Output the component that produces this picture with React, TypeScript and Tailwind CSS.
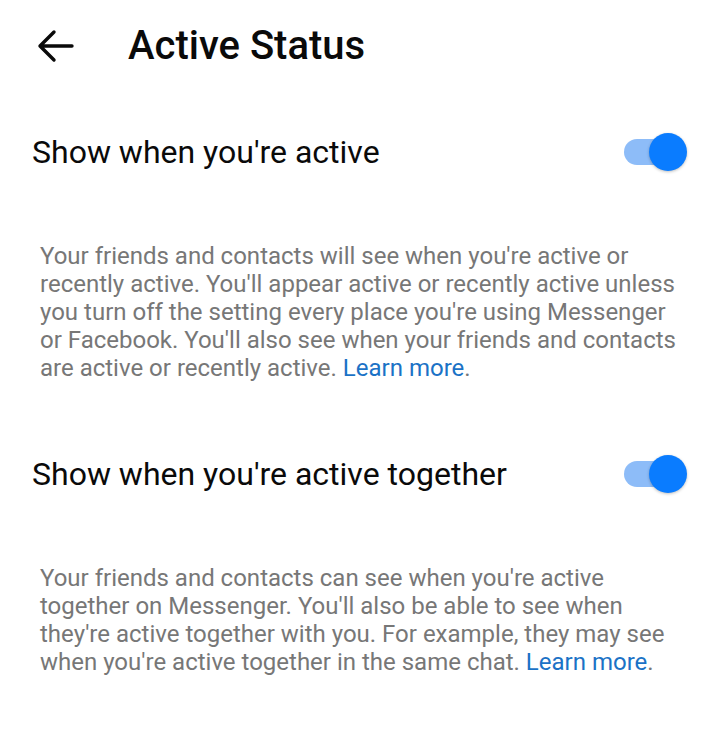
import React, { useState } from "react";

function Toggle({ on, onChange }: { on: boolean; onChange: () => void }) {
  return (
    <button
      onClick={onChange}
      className="relative flex h-[38px] w-[64px] shrink-0 items-center"
    >
      <span
        className={`h-[26px] w-[56px] rounded-full ${
          on ? "bg-[#8dbcf8]" : "bg-[#c4c6ca]"
        }`}
      />
      <span
        className={`absolute top-0 h-[38px] w-[38px] rounded-full shadow-[0_1px_3px_rgba(0,0,0,0.25)] ${
          on ? "left-[25px] bg-[#0a7cff]" : "left-[-6px] bg-white"
        }`}
      />
    </button>
  );
}

function Setting({
  title,
  children,
}: {
  title: string;
  children: React.ReactNode;
}) {
  const [on, setOn] = useState(true);
  return (
    <section>
      <div className="flex items-center justify-between pl-8 pr-[32px]">
        <h2 className="text-[32px] leading-[38px] text-[#0a0a0a]">{title}</h2>
        <Toggle on={on} onChange={() => setOn(!on)} />
      </div>
      <p className="mt-[71px] pl-10 pr-[38px] text-[24px] leading-[28px] text-[#777777]">
        {children}
      </p>
    </section>
  );
}

export default function App() {
  return (
    <div
      className="min-h-[750px] w-[720px] bg-white"
      style={{ fontFamily: "Roboto, 'Noto Sans', sans-serif" }}
    >
      <header className="flex h-[92px] items-center">
        <button className="ml-[36px] flex h-[40px] w-[40px] items-center justify-center">
          <svg
            width="40"
            height="40"
            viewBox="0 0 40 40"
            fill="none"
            stroke="#0a0a0a"
            strokeWidth="3.4"
            strokeLinecap="round"
            strokeLinejoin="round"
          >
            <path d="M36 20H4M18 6L4 20l14 14" />
          </svg>
        </button>
        <h1 className="ml-[52px] text-[40px] font-medium text-[#0a0a0a]">
          Active Status
        </h1>
      </header>

      <div className="mt-[41px]">
        <Setting title="Show when you're active">
          Your friends and contacts will see when you're active or recently
          active. You'll appear active or recently active unless you turn off
          the setting every place you're using Messenger or Facebook. You'll
          also see when your friends and contacts are active or recently
          active. <span className="text-[#1b72c6]">Learn more</span>.
        </Setting>
      </div>

      <div className="mt-[73px]">
        <Setting title="Show when you're active together">
          Your friends and contacts can see when you're active together on
          Messenger. You'll also be able to see when they're active together
          with you. For example, they may see when you're active together in
          the same chat. <span className="text-[#1b72c6]">Learn more</span>.
        </Setting>
      </div>
    </div>
  );
}
